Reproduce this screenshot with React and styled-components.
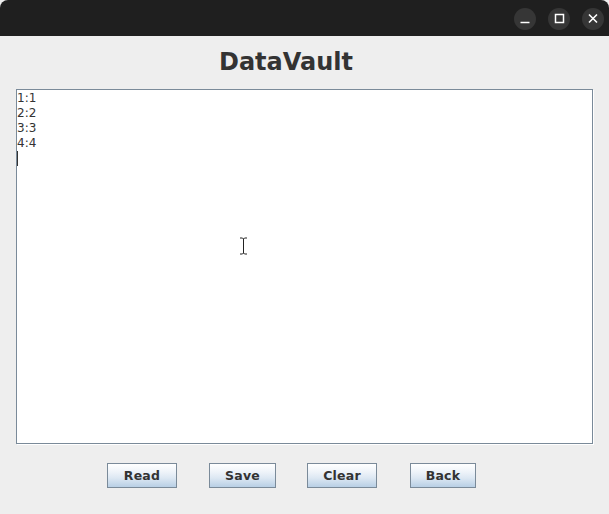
import React from "react";
import styled, { createGlobalStyle } from "styled-components";

const Global = createGlobalStyle`
  html, body { margin: 0; padding: 0; background: #eeeeee; }
  body { font-family: "DejaVu Sans", sans-serif; }
`;

const Window = styled.div`
  width: 609px;
  height: 514px;
  display: flex;
  flex-direction: column;
  background: #eeeeee;
  overflow: hidden;
`;

const TitleBar = styled.div`
  height: 36px;
  background: #1f1f1f;
  border-radius: 8px 8px 0 0;
  display: flex;
  align-items: center;
  justify-content: flex-end;
  gap: 12px;
  padding: 1px 5px 0 0;
  box-sizing: border-box;
`;

const WinButton = styled.div`
  width: 22px;
  height: 22px;
  border-radius: 50%;
  background: #363636;
  display: flex;
  align-items: center;
  justify-content: center;
  svg { display: block; }
`;

const Content = styled.div`
  flex: 1;
  display: flex;
  flex-direction: column;
  padding: 0 16px;
`;

const Heading = styled.h1`
  margin: 0;
  height: 53px;
  padding: 12px 0 0 203px;
  box-sizing: border-box;
  font-family: "DejaVu Sans", sans-serif;
  font-weight: bold;
  font-size: 24px;
  line-height: 29px;
  color: #333333;
`;

const TextArea = styled.div`
  width: 577px;
  height: 355px;
  box-sizing: border-box;
  background: #ffffff;
  border: 1px solid #7a8a99;
  box-shadow: 1px 1px 0 #ffffff;
  padding: 1px 0 0 0;
  font-family: "DejaVu Sans", sans-serif;
  font-size: 12px;
  line-height: 15px;
  color: #333333;
  position: relative;
`;

const Line = styled.div`
  height: 15px;
`;

const Caret = styled.div`
  width: 1px;
  height: 15px;
  background: #333333;
`;

const IBeam = styled.svg`
  position: absolute;
  left: 222px;
  top: 147px;
`;

const ButtonRow = styled.div`
  display: flex;
  padding: 19px 0 0 91px;
`;

const Button = styled.button`
  width: ${(p) => p.$w}px;
  height: 25px;
  margin-right: ${(p) => p.$mr}px;
  box-sizing: border-box;
  border: 1px solid #7a8a99;
  border-radius: 0;
  background: linear-gradient(to bottom, #ffffff 0%, #eef3f9 35%, #dde8f3 60%, #b8cfe5 100%);
  font-family: "DejaVu Sans", sans-serif;
  font-weight: bold;
  font-size: 12.5px;
  letter-spacing: 0.2px;
  color: #333333;
  padding: 0;
  display: flex;
  align-items: center;
  justify-content: center;
`;

const buttons = [
  { label: "Read", w: 70, mr: 32 },
  { label: "Save", w: 67, mr: 31 },
  { label: "Clear", w: 70, mr: 33 },
  { label: "Back", w: 66, mr: 0 },
];

export default function App() {
  return (
    <>
      <Global />
      <Window>
        <TitleBar>
          <WinButton>
            <svg width="22" height="22" viewBox="0 0 22 22">
              <line x1="6.5" y1="14.5" x2="15.5" y2="14.5" stroke="#fff" strokeWidth="1.5" />
            </svg>
          </WinButton>
          <WinButton>
            <svg width="22" height="22" viewBox="0 0 22 22">
              <rect x="7.5" y="6.5" width="8" height="8" fill="none" stroke="#fff" strokeWidth="1.5" />
            </svg>
          </WinButton>
          <WinButton>
            <svg width="22" height="22" viewBox="0 0 22 22">
              <path d="M7 6.5 L15 14.5 M15 6.5 L7 14.5" stroke="#fff" strokeWidth="1.6" />
            </svg>
          </WinButton>
        </TitleBar>
        <Content>
          <Heading>DataVault</Heading>
          <TextArea>
            <Line>1:1</Line>
            <Line>2:2</Line>
            <Line>3:3</Line>
            <Line>4:4</Line>
            <Caret />
            <IBeam width="9" height="18" viewBox="0 0 9 18">
              <path d="M1 1 H3.5 L4.5 2 L5.5 1 H8 M4.5 2 V16 M1 17 H3.5 L4.5 16 L5.5 17 H8" fill="none" stroke="#ffffff" strokeWidth="2.5" />
              <path d="M1 1 H3.5 L4.5 2 L5.5 1 H8 M4.5 2 V16 M1 17 H3.5 L4.5 16 L5.5 17 H8" fill="none" stroke="#222" strokeWidth="1" />
            </IBeam>
          </TextArea>
          <ButtonRow>
            {buttons.map((b) => (
              <Button key={b.label} $w={b.w} $mr={b.mr}>
                {b.label}
              </Button>
            ))}
          </ButtonRow>
        </Content>
      </Window>
    </>
  );
}
